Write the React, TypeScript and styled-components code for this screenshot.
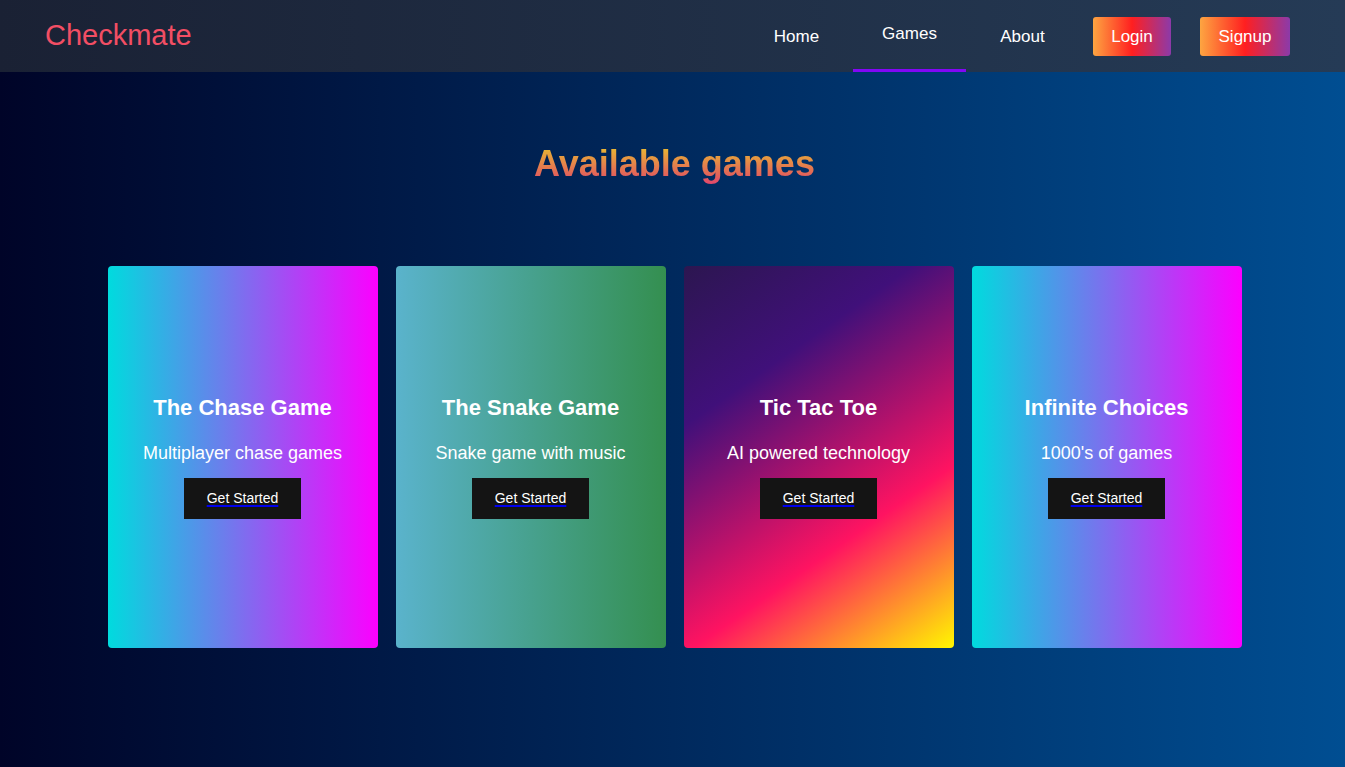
import React from "react";
import styled, { createGlobalStyle } from "styled-components";

const Global = createGlobalStyle`
  html, body { margin: 0; padding: 0; }
  body {
    font-family: "Liberation Sans", Arial, sans-serif;
    background: linear-gradient(to right, #000428, #004e92);
    min-height: 767px;
  }
  * { box-sizing: border-box; }
`;

const Page = styled.div`
  min-height: 767px;
  background: linear-gradient(to right, #000428, #004e92);
`;

const Nav = styled.nav`
  height: 72px;
  display: flex;
  align-items: stretch;
  justify-content: space-between;
  padding: 0 55px 0 45px;
  background: linear-gradient(to right, #1a2134, #253b56);
`;

const Brand = styled.div`
  display: flex;
  align-items: center;
  color: #f24e64;
  font-size: 29px;
  padding-bottom: 1px;
`;

const Links = styled.div`
  display: flex;
  align-items: stretch;
`;

const NavLink = styled.a<{ $active?: boolean }>`
  display: flex;
  align-items: center;
  justify-content: center;
  width: 113px;
  color: #ffffff;
  font-size: 17px;
  text-decoration: none;
  border-bottom: 3px solid ${(p) => (p.$active ? "#8207f5" : "transparent")};
  padding-top: ${(p) => (p.$active ? "0" : "4px")};
  padding-bottom: ${(p) => (p.$active ? "1px" : "0")};
`;

const Buttons = styled.div`
  display: flex;
  align-items: center;
  gap: 29px;
  margin-left: 14px;
`;

const AuthButton = styled.button<{ $w: number }>`
  width: ${(p) => p.$w}px;
  height: 39px;
  border: none;
  border-radius: 3px;
  color: #ffffff;
  font-family: "Liberation Sans", Arial, sans-serif;
  font-size: 17px;
  background: linear-gradient(to right, #fda541, #ff1f20 50%, #8c3aa9);
  cursor: pointer;
  padding: 2px 0 0;
`;

const Main = styled.main`
  display: flex;
  flex-direction: column;
  align-items: center;
  padding-left: 4px;
`;

const Heading = styled.h1`
  margin: 71px 0 0;
  font-size: 36px;
  font-weight: bold;
  line-height: 42px;
  background: linear-gradient(to bottom, #e9b932 10%, #e26a56 70%, #e2456e);
  -webkit-background-clip: text;
  background-clip: text;
  color: transparent;
`;

const Grid = styled.div`
  display: flex;
  gap: 18px;
  margin-top: 81px;
`;

const Card = styled.div<{ $bg: string }>`
  width: 270px;
  height: 382px;
  border-radius: 4px;
  background: ${(p) => p.$bg};
  display: flex;
  flex-direction: column;
  align-items: center;
  justify-content: center;
  color: #ffffff;
`;

const CardTitle = styled.h2`
  margin: 0;
  font-size: 22px;
  font-weight: bold;
  line-height: 26px;
`;

const CardText = styled.p`
  margin: 21px 0 14px;
  font-size: 18px;
  line-height: 22px;
`;

const StartLink = styled.a`
  display: block;
  text-decoration: none;
`;

const StartButton = styled.span`
  display: flex;
  align-items: center;
  justify-content: center;
  width: 117px;
  height: 41px;
  background: #141414;
  font-size: 14px;
  padding-bottom: 1px;
`;

const StartLabel = styled.span`
  color: #ffffff;
  text-decoration-line: underline;
  text-decoration-color: #0000ee;
  text-decoration-thickness: 2px;
  text-underline-offset: 2px;
`;

const games = [
  {
    title: "The Chase Game",
    text: "Multiplayer chase games",
    bg: "linear-gradient(to right, #00dbde, #fc00ff)",
  },
  {
    title: "The Snake Game",
    text: "Snake game with music",
    bg: "linear-gradient(to right, #5ab3cc, #348f50)",
  },
  {
    title: "Tic Tac Toe",
    text: "AI powered technology",
    bg: "linear-gradient(145deg, #2c1650 0%, #40107a 28%, #ff1361 68%, #fff800 100%)",
  },
  {
    title: "Infinite Choices",
    text: "1000's of games",
    bg: "linear-gradient(to right, #00dbde, #fc00ff)",
  },
];

export default function App() {
  return (
    <>
      <Global />
      <Page>
        <Nav>
          <Brand>Checkmate</Brand>
          <Links>
            <NavLink href="#">Home</NavLink>
            <NavLink href="#" $active>
              Games
            </NavLink>
            <NavLink href="#">About</NavLink>
            <Buttons>
              <AuthButton $w={78}>Login</AuthButton>
              <AuthButton $w={90}>Signup</AuthButton>
            </Buttons>
          </Links>
        </Nav>
        <Main>
          <Heading>Available games</Heading>
          <Grid>
            {games.map((g) => (
              <Card key={g.title} $bg={g.bg}>
                <CardTitle>{g.title}</CardTitle>
                <CardText>{g.text}</CardText>
                <StartLink href="#">
                  <StartButton>
                    <StartLabel>Get Started</StartLabel>
                  </StartButton>
                </StartLink>
              </Card>
            ))}
          </Grid>
        </Main>
      </Page>
    </>
  );
}
